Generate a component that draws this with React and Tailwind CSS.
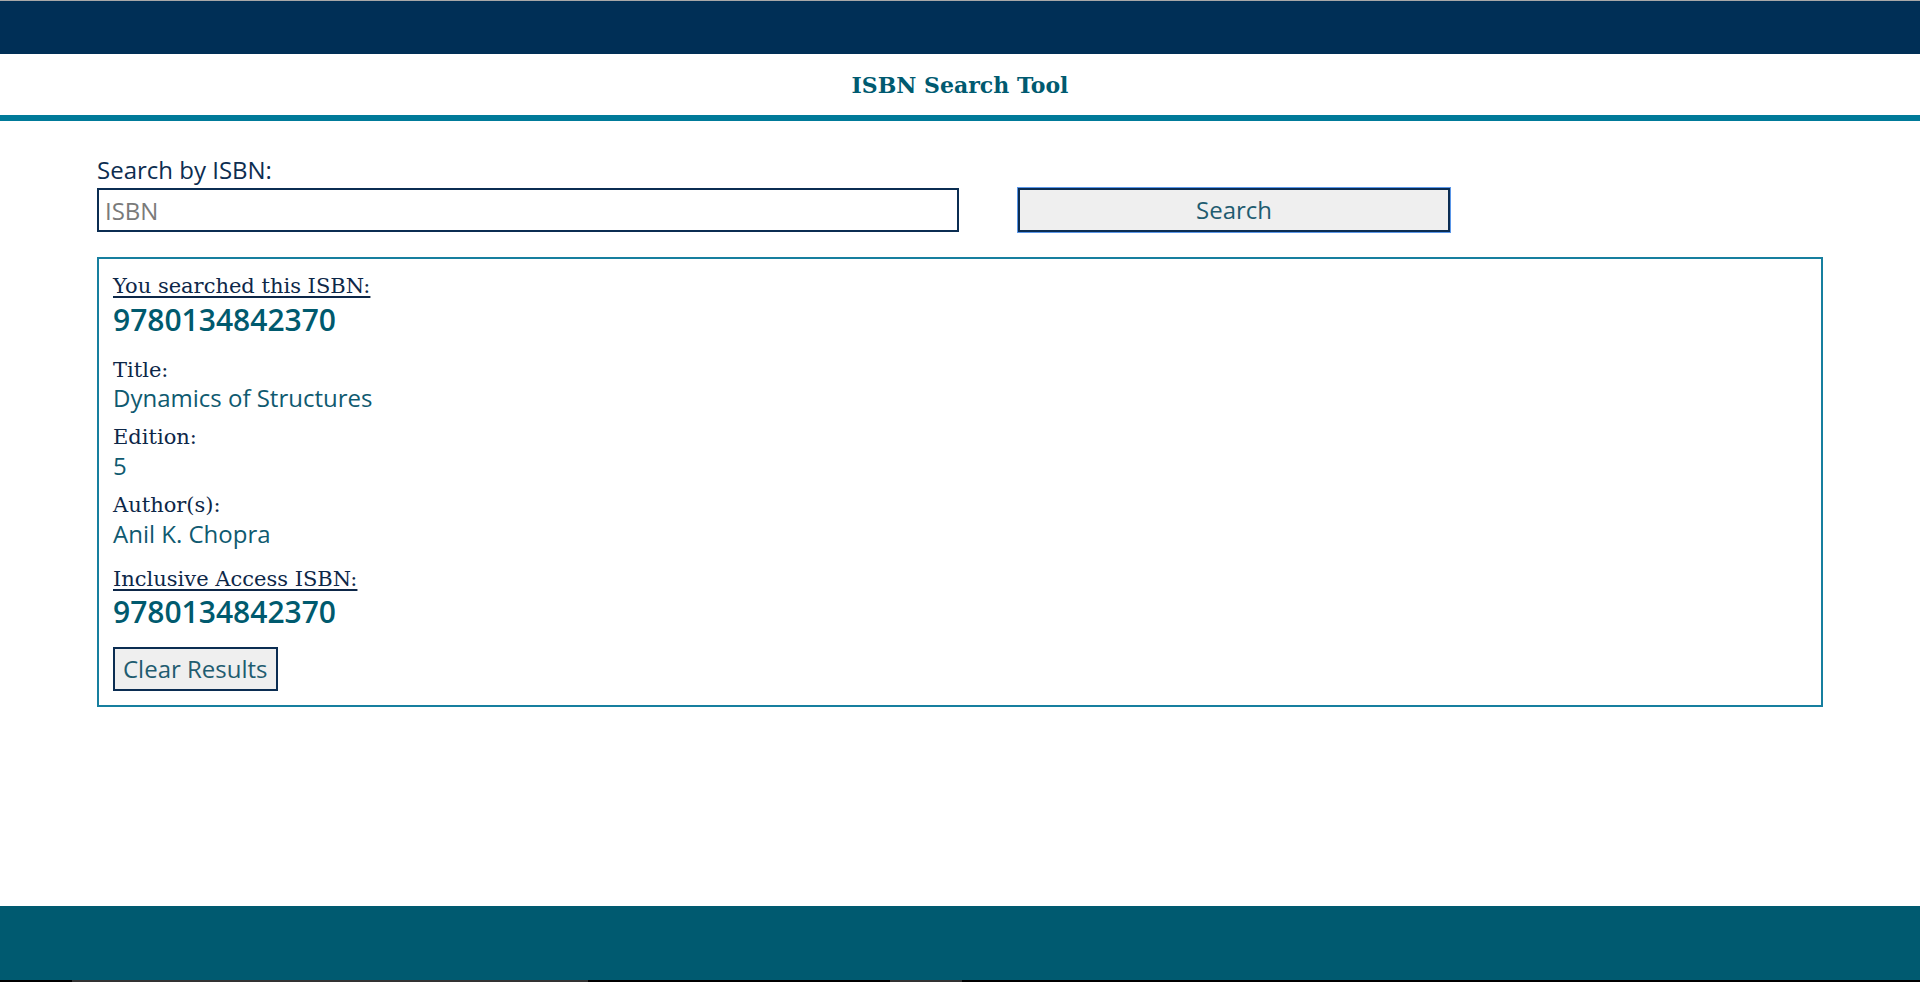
export default function App() {
  const serif = "font-['DejaVu_Serif',serif]";
  const sans = "font-['Open_Sans',sans-serif]";
  return (
    <div className="min-h-[982px] flex flex-col bg-white">
      <div className="h-px bg-[#a8a8a8]" />
      <div className="h-[53px] bg-[#002f56]" />
      <div className="h-[61px] flex items-center justify-center">
        <h1 className={`${serif} font-bold text-[22px] leading-[26px] text-[#005a70]`}>ISBN Search Tool</h1>
      </div>
      <div className="h-[6px] bg-[#007a99]" />
      <main className={`flex-1 px-[97px] pt-[32px] ${sans}`}>
        <label className="block text-[24px] leading-[33px] text-[#0d2d50]">Search by ISBN:</label>
        <div className="mt-[2px] flex items-start">
          <input
            type="text"
            placeholder="ISBN"
            className="w-[862px] h-[44px] border-2 border-[#0b2d52] px-[6px] text-[24px] text-[#1f5c70] placeholder:text-[#7a7a7a] outline-none bg-white"
          />
          <button className="ml-[59px] w-[432px] h-[44px] border-2 border-[#0b2d52] bg-[#efefef] text-[24px] leading-[34px] text-[#1f5c70] shadow-[0_0_0_1px_#5a96e8]">
            Search
          </button>
        </div>
        <div className="mt-[25px] border-2 border-[#177f9f] pl-[14px] pr-[14px] pt-[15px] pb-[14px]">
          <div className={`${serif} text-[21px] leading-[24px] text-[#0d2748] underline underline-offset-[3px]`}>You searched this ISBN:</div>
          <div className="mt-[3px] text-[30px] leading-[38px] font-semibold text-[#005a6e]">9780134842370</div>

          <div className={`mt-[19px] ${serif} text-[21px] leading-[24px] text-[#0d2748]`}>Title:</div>
          <div className="mt-[1px] text-[24px] leading-[30px] text-[#0f5a70]">Dynamics of Structures</div>

          <div className={`mt-[12px] ${serif} text-[21px] leading-[24px] text-[#0d2748]`}>Edition:</div>
          <div className="mt-[2px] text-[24px] leading-[30px] text-[#0f5a70]">5</div>

          <div className={`mt-[12px] ${serif} text-[21px] leading-[24px] text-[#0d2748]`}>Author(s):</div>
          <div className="mt-[2px] text-[24px] leading-[30px] text-[#0f5a70]">Anil K. Chopra</div>

          <div className={`mt-[18px] ${serif} text-[21px] leading-[24px] text-[#0d2748] underline underline-offset-[3px]`}>Inclusive Access ISBN:</div>
          <div className="mt-[2px] text-[30px] leading-[38px] font-semibold text-[#005a6e]">9780134842370</div>

          <button className="mt-[16px] h-[44px] border-2 border-[#0b2d52] bg-[#efefef] px-[8px] text-[24px] leading-[34px] text-[#1f5c70]">
            Clear Results
          </button>
        </div>
      </main>
      <footer className="h-[74px] bg-[#005a70]" />
      <div className="h-[2px] flex bg-black">
        <div className="w-[72px]" />
        <div className="w-[516px] bg-[#333333]" />
        <div className="w-[302px]" />
        <div className="w-[72px] bg-[#333333]" />
      </div>
    </div>
  );
}
